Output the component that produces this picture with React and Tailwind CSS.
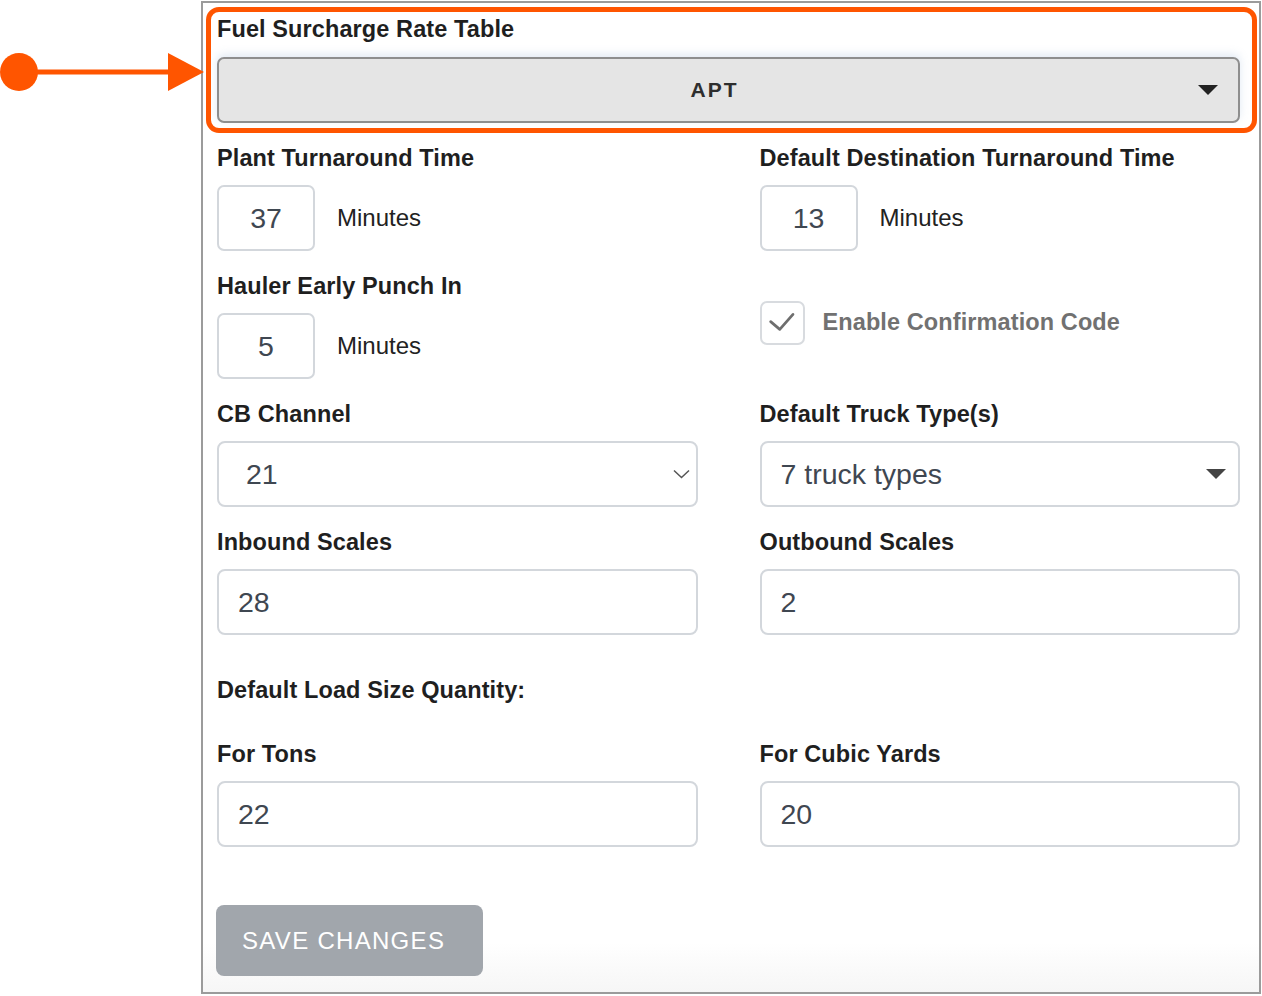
import React from "react";

const LABEL =
  "text-[23.5px] leading-[28px] font-bold text-[#1f1f1f] tracking-[0.1px]";

const VALUE = "text-[28.5px] text-[#3f4751]";

const Caret = ({ className = "", color = "#333" }) => (
  <svg width="20" height="10" viewBox="0 0 20 10" className={className}>
    <polygon points="0,0 20,0 10,10" fill={color} />
  </svg>
);

const SmallInput = ({ label, value }) => (
  <div className="flex flex-col">
    <div className={LABEL}>{label}</div>
    <div className="mt-[13px] flex items-center h-[66px]">
      <input
        readOnly
        value={value}
        className={`w-[98px] h-[66px] border-2 border-[#d3d7dc] rounded-[7px] text-center outline-none bg-white ${VALUE}`}
      />
      <span className="ml-[22px] text-[24px] text-[#222]">Minutes</span>
    </div>
  </div>
);

const TextField = ({ label, value }) => (
  <div className="flex flex-col">
    <div className={LABEL}>{label}</div>
    <input
      readOnly
      value={value}
      className={`mt-[13px] w-full h-[66px] border-2 border-[#d3d7dc] rounded-[8px] pl-[19px] outline-none bg-white ${VALUE}`}
    />
  </div>
);

export default function App() {
  return (
    <div className="relative min-h-[996px] bg-white pt-[1px] font-['Liberation_Sans',Arial,sans-serif]">
      {/* callout arrow */}
      <svg
        width="210"
        height="44"
        viewBox="0 0 210 44"
        className="absolute left-0 top-[52px]"
      >
        <circle cx="19" cy="20" r="19" fill="#ff5500" />
        <rect x="30" y="17.5" width="140" height="5" fill="#ff5500" />
        <polygon points="168,1 168,39 204,20" fill="#ff5500" />
      </svg>

      <div className="ml-[201px] w-[1060px] border-2 border-[#9b9b9b] bg-[linear-gradient(to_bottom,#ffffff_95%,#f6f6f6)] pl-[13px] pr-[19px] pt-[12px] pb-[16px]">
        <div className="relative">
          {/* highlight frame */}
          <div className="absolute left-[-10px] top-[-8px] w-[1051px] h-[126px] border-[5px] border-[#ff5500] rounded-[13px] pointer-events-none" />
          <div className={`pl-[1px] ${LABEL}`}>Fuel Surcharge Rate Table</div>
          <div className="mt-[14px] ml-[1px] h-[66px] flex items-center bg-[#e5e5e5] border-2 border-[#8e8e8e] rounded-[7px] shadow-[0_-3px_8px_rgba(140,170,210,0.25)]">
            <span className="flex-1 text-center text-[21px] font-bold tracking-[2px] text-[#2e2e2e]">
              APT
            </span>
            <Caret className="ml-[-12px] mr-[20px]" color="#222" />
          </div>
        </div>

        <div className="mt-[21px] grid grid-cols-2 gap-x-[62px] gap-y-[21px] pl-[1px]">
          <SmallInput label="Plant Turnaround Time" value="37" />
          <SmallInput label="Default Destination Turnaround Time" value="13" />

          <SmallInput label="Hauler Early Punch In" value="5" />
          <div className="flex items-center pb-[5px]">
            <div className="w-[45px] h-[44px] border-2 border-[#d8dbdf] rounded-[7px] flex items-center justify-center">
              <svg width="45" height="44" viewBox="0 0 45 44">
                <polyline
                  points="9.5,20.5 19.5,29 34,12.5"
                  fill="none"
                  stroke="#6e6e6e"
                  strokeWidth="3"
                  strokeLinecap="round"
                  strokeLinejoin="round"
                />
              </svg>
            </div>
            <span className="ml-[18px] text-[23.5px] font-bold tracking-[0.1px] text-[#717171]">
              Enable Confirmation Code
            </span>
          </div>

          <div className="flex flex-col">
            <div className={LABEL}>CB Channel</div>
            <div className="mt-[13px] h-[66px] flex items-center justify-between border-2 border-[#d3d7dc] rounded-[8px] pl-[27px] pr-[6px] bg-white">
              <span className={VALUE}>21</span>
              <svg width="17" height="10" viewBox="0 0 17 10">
                <polyline
                  points="1,1.5 8.5,8.5 16,1.5"
                  fill="none"
                  stroke="#555"
                  strokeWidth="1.5"
                />
              </svg>
            </div>
          </div>
          <div className="flex flex-col">
            <div className={LABEL}>Default Truck Type(s)</div>
            <div className="mt-[13px] h-[66px] flex items-center justify-between border-2 border-[#d3d7dc] rounded-[8px] pl-[19px] pr-[12px] bg-white">
              <span className={VALUE}>7 truck types</span>
              <Caret color="#444" />
            </div>
          </div>

          <TextField label="Inbound Scales" value="28" />
          <TextField label="Outbound Scales" value="2" />
        </div>

        <div className={`mt-[41px] pl-[1px] ${LABEL}`}>Default Load Size Quantity:</div>

        <div className="mt-[36px] grid grid-cols-2 gap-x-[62px] pl-[1px]">
          <TextField label="For Tons" value="22" />
          <TextField label="For Cubic Yards" value="20" />
        </div>

        <button className="mt-[58px] w-[267px] h-[71px] rounded-[8px] bg-[#a1a6ac] text-left pl-[26px] text-[24px] tracking-[1.3px] text-white">
          SAVE CHANGES
        </button>
      </div>
    </div>
  );
}
